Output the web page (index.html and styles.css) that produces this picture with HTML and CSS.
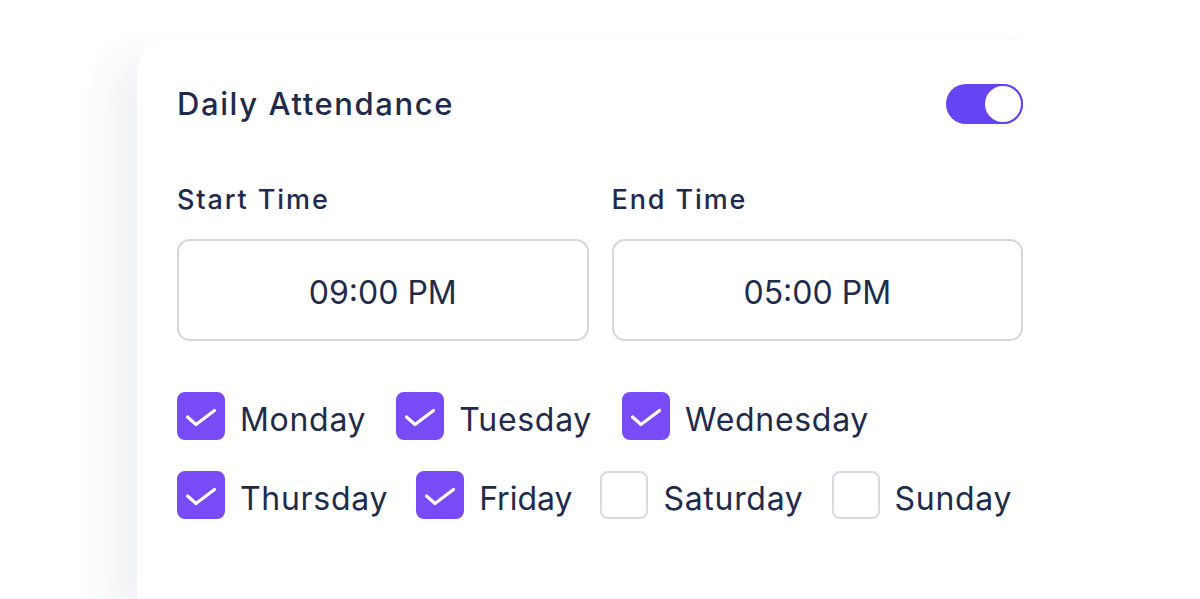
FILE: index.html
```html
<!DOCTYPE html>
<html lang="en">
<head>
<meta charset="utf-8">
<title>Daily Attendance</title>
<link rel="stylesheet" href="styles.css">
</head>
<body>
<div class="card">
  <div class="header">
    <h1 class="title">Daily Attendance</h1>
    <div class="toggle"><span class="knob"></span></div>
  </div>
  <div class="times">
    <div class="field">
      <div class="label">Start Time</div>
      <div class="input">09:00 PM</div>
    </div>
    <div class="field">
      <div class="label">End Time</div>
      <div class="input">05:00 PM</div>
    </div>
  </div>
  <div class="days">
    <div class="row">
      <div class="day"><span class="box on"><svg viewBox="0 0 48 48"><path d="M10.5 25 L19 32.5 L37.5 18.5"/></svg></span><span class="name">Monday</span></div>
      <div class="day"><span class="box on"><svg viewBox="0 0 48 48"><path d="M10.5 25 L19 32.5 L37.5 18.5"/></svg></span><span class="name">Tuesday</span></div>
      <div class="day"><span class="box on"><svg viewBox="0 0 48 48"><path d="M10.5 25 L19 32.5 L37.5 18.5"/></svg></span><span class="name">Wednesday</span></div>
    </div>
    <div class="row row-tight">
      <div class="day"><span class="box on"><svg viewBox="0 0 48 48"><path d="M10.5 25 L19 32.5 L37.5 18.5"/></svg></span><span class="name">Thursday</span></div>
      <div class="day"><span class="box on"><svg viewBox="0 0 48 48"><path d="M10.5 25 L19 32.5 L37.5 18.5"/></svg></span><span class="name name-narrow">Friday</span></div>
      <div class="day"><span class="box"></span><span class="name">Saturday</span></div>
      <div class="day"><span class="box"></span><span class="name">Sunday</span></div>
    </div>
  </div>
</div>
</body>
</html>
```
FILE: styles.css
```css
html, body {
  margin: 0;
  padding: 0;
  background: #ffffff;
  overflow: hidden;
}
body {
  font-family: Inter, "Noto Sans", "Liberation Sans", sans-serif;
  color: #1f2b4b;
  width: 1200px;
  height: 599px;
}
.card {
  margin: 40px 0 0 137px;
  width: 925px;
  height: 559px;
  box-sizing: border-box;
  padding: 43px 39px 0 40px;
  background: #ffffff;
  border-radius: 32px 32px 0 0;
  box-shadow: -26px 18px 40px rgba(40, 50, 90, 0.07);
}
.header {
  display: flex;
  justify-content: space-between;
  align-items: center;
  height: 41px;
}
.title {
  margin: 0;
  font-size: 31px;
  font-weight: 500;
  letter-spacing: 1.6px;
}
.toggle {
  width: 77px;
  height: 40px;
  border-radius: 20px;
  background: #6643f3;
  display: flex;
  justify-content: flex-end;
  align-items: center;
}
.knob {
  width: 36px;
  height: 36px;
  border-radius: 50%;
  background: #ffffff;
  border: 2px solid #6643f3;
}
.times {
  margin-top: 60px;
  display: grid;
  grid-template-columns: 1fr 1fr;
  column-gap: 23px;
}
.label {
  font-size: 27px;
  font-weight: 500;
  line-height: 32px;
  letter-spacing: 1.9px;
  margin-bottom: 23px;
}
.input {
  height: 102px;
  box-sizing: border-box;
  border: 2px solid #d3d6de;
  border-radius: 13px;
  display: flex;
  align-items: center;
  justify-content: center;
  padding-top: 5px;
  font-size: 32px;
  font-weight: 400;
}
.days {
  margin-top: 51px;
  display: flex;
  flex-direction: column;
  gap: 31px;
}
.row {
  display: flex;
  gap: 30px;
}
.row-tight {
  gap: 28px;
}
.day {
  display: flex;
  align-items: center;
  gap: 15px;
}
.box {
  width: 48px;
  height: 48px;
  box-sizing: border-box;
  border-radius: 8px;
  border: 2px solid #d8dbe2;
  background: #ffffff;
  display: flex;
}
.box.on {
  background: #774bf5;
  border-color: #774bf5;
}
.box svg {
  width: 48px;
  height: 48px;
  margin: -2px;
}
.box svg path {
  fill: none;
  stroke: #ffffff;
  stroke-width: 3.2;
  stroke-linecap: round;
  stroke-linejoin: round;
}
.name {
  font-size: 32px;
  font-weight: 400;
  line-height: 40px;
  letter-spacing: 0.7px;
  padding-top: 7px;
}
.name-narrow {
  letter-spacing: 0;
}
```
